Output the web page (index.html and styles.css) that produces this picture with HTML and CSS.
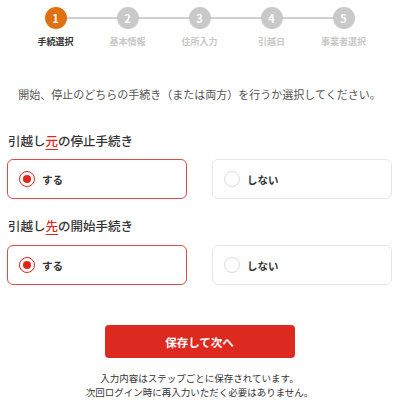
FILE: index.html
```html
<!DOCTYPE html>
<html lang="ja">
<head>
<meta charset="utf-8">
<link rel="stylesheet" href="styles.css">
</head>
<body>
<div class="page">
  <ol class="stepper">
    <li class="step active"><span class="dot">1</span><span class="label">手続選択</span></li>
    <li class="step"><span class="dot">2</span><span class="label">基本情報</span></li>
    <li class="step"><span class="dot">3</span><span class="label">住所入力</span></li>
    <li class="step"><span class="dot">4</span><span class="label">引越日</span></li>
    <li class="step"><span class="dot">5</span><span class="label">事業者選択</span></li>
  </ol>

  <p class="intro">開始、停止のどちらの手続き（または両方）を行うか選択してください。</p>

  <h2 class="q-title">引越し<span class="mark">元</span>の停止手続き</h2>
  <div class="options">
    <label class="option selected"><span class="radio"></span><span class="opt-text">する</span></label>
    <label class="option"><span class="radio"></span><span class="opt-text">しない</span></label>
  </div>

  <h2 class="q-title second">引越し<span class="mark">先</span>の開始手続き</h2>
  <div class="options">
    <label class="option selected"><span class="radio"></span><span class="opt-text">する</span></label>
    <label class="option"><span class="radio"></span><span class="opt-text">しない</span></label>
  </div>

  <div class="actions">
    <button class="btn-next" type="button">保存して次へ</button>
  </div>
  <p class="note">入力内容はステップごとに保存されています。<br>次回ログイン時に再入力いただく必要はありません。</p>
</div>
</body>
</html>
```

FILE: styles.css
```css
* { box-sizing: border-box; }
html, body { margin: 0; padding: 0; background: #fff; }
body {
  font-family: "Noto Sans CJK JP", "Noto Sans", sans-serif;
  color: #333;
}
.page { padding: 7px 8px 0 7px; }

.stepper {
  list-style: none;
  margin: 0 auto;
  padding: 0;
  width: 360px;
  display: flex;
}
.step {
  flex: 1;
  display: flex;
  flex-direction: column;
  align-items: center;
  position: relative;
}
.step + .step::before {
  content: "";
  position: absolute;
  top: 10px;
  right: 50%;
  width: 100%;
  height: 2px;
  background: #cfcfcf;
  z-index: 0;
}
.dot {
  position: relative;
  z-index: 1;
  width: 22px;
  height: 22px;
  border-radius: 50%;
  background: #c9c9c9;
  color: #fff;
  font-size: 11px;
  font-weight: 700;
  line-height: 22px;
  text-align: center;
}
.step.active .dot { background: #e07010; }
.label {
  margin-top: 7px;
  font-size: 9px;
  line-height: 12px;
  font-weight: 700;
  color: #c8c8c8;
  white-space: nowrap;
}
.step.active .label { color: #333; }

.intro {
  margin: 38px 0 0;
  text-align: center;
  font-size: 11px;
  line-height: 16px;
  color: #555;
}

.q-title {
  margin: 30px 0 0 1px;
  font-size: 12.5px;
  line-height: 18px;
  font-weight: 500;
  color: #333;
}
.q-title.second { margin-top: 18px; }
.mark {
  color: #e0251c;
  text-decoration: underline;
  text-decoration-color: #e0251c;
  text-underline-offset: 3px;
}

.options {
  margin-top: 9px;
  display: grid;
  grid-template-columns: 1fr 1fr;
  column-gap: 25px;
}
.q-title.second + .options { margin-top: 10px; }
.option {
  height: 40px;
  border: 1px solid #e6e6e6;
  border-radius: 6px;
  display: flex;
  align-items: center;
  padding-left: 11px;
  gap: 7px;
}
.option.selected { border-color: #dd4b4b; }
.radio {
  width: 16px;
  height: 16px;
  border-radius: 50%;
  border: 1.5px solid #dcdcdc;
  display: flex;
  align-items: center;
  justify-content: center;
}
.option.selected .radio { border-color: #e0251c; }
.option.selected .radio::after {
  content: "";
  width: 8px;
  height: 8px;
  border-radius: 50%;
  background: #e0251c;
}
.opt-text {
  font-size: 10.5px;
  font-weight: 700;
  color: #333;
}

.actions {
  margin-top: 40px;
  display: flex;
  justify-content: center;
}
.btn-next {
  width: 190px;
  height: 33px;
  border: none;
  border-radius: 4px;
  background: #dc2a20;
  color: #fff;
  font-family: inherit;
  font-size: 11.5px;
  font-weight: 700;
}

.note {
  margin: 14px 0 0;
  text-align: center;
  font-size: 9.5px;
  line-height: 13.5px;
  color: #333;
}
```
